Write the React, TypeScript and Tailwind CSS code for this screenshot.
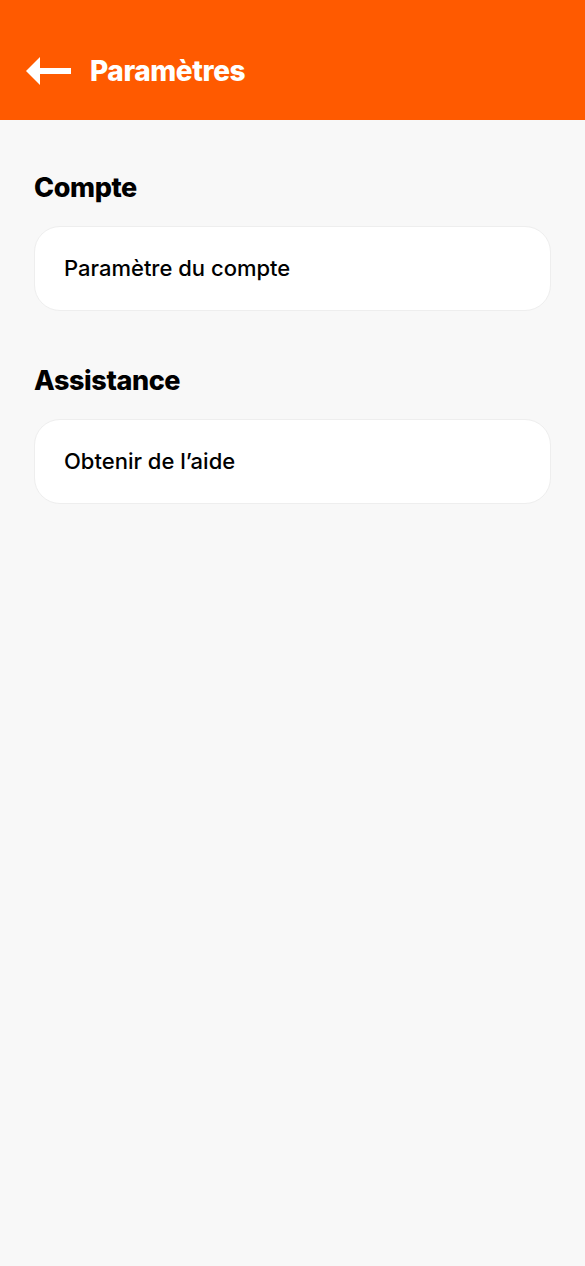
export default function App() {
  const sections = [
    { title: "Compte", items: ["Paramètre du compte"] },
    { title: "Assistance", items: ["Obtenir de l’aide"] },
  ];

  return (
    <div className="min-h-[1266px] bg-[#f8f8f8]" style={{ fontFamily: "Inter, Roboto, 'Liberation Sans', sans-serif" }}>
      <header className="h-[120px] bg-[#ff5a00] flex items-center pl-[26px] pt-[22px] gap-[19px]">
        <svg width="45" height="28" viewBox="0 0 45 28" fill="none">
          <path d="M14 0 L0 14 L14 28 Z" fill="white" />
          <rect x="12" y="11" width="33" height="6" fill="white" />
        </svg>
        <h1 className="text-white text-[28px] font-extrabold tracking-[-0.4px]">Paramètres</h1>
      </header>
      <main className="px-[34px] pt-[52px] flex flex-col gap-[54px]">
        {sections.map((s) => (
          <section key={s.title}>
            <h2 className="text-[27px] font-extrabold text-black leading-[32px] mb-[22px] tracking-[-0.4px]">{s.title}</h2>
            {s.items.map((item) => (
              <div
                key={item}
                className="h-[85px] rounded-[26px] bg-white border border-[#eeeeee] flex items-center pl-[29px] text-[22px] font-medium text-black"
              >
                {item}
              </div>
            ))}
          </section>
        ))}
      </main>
    </div>
  );
}
